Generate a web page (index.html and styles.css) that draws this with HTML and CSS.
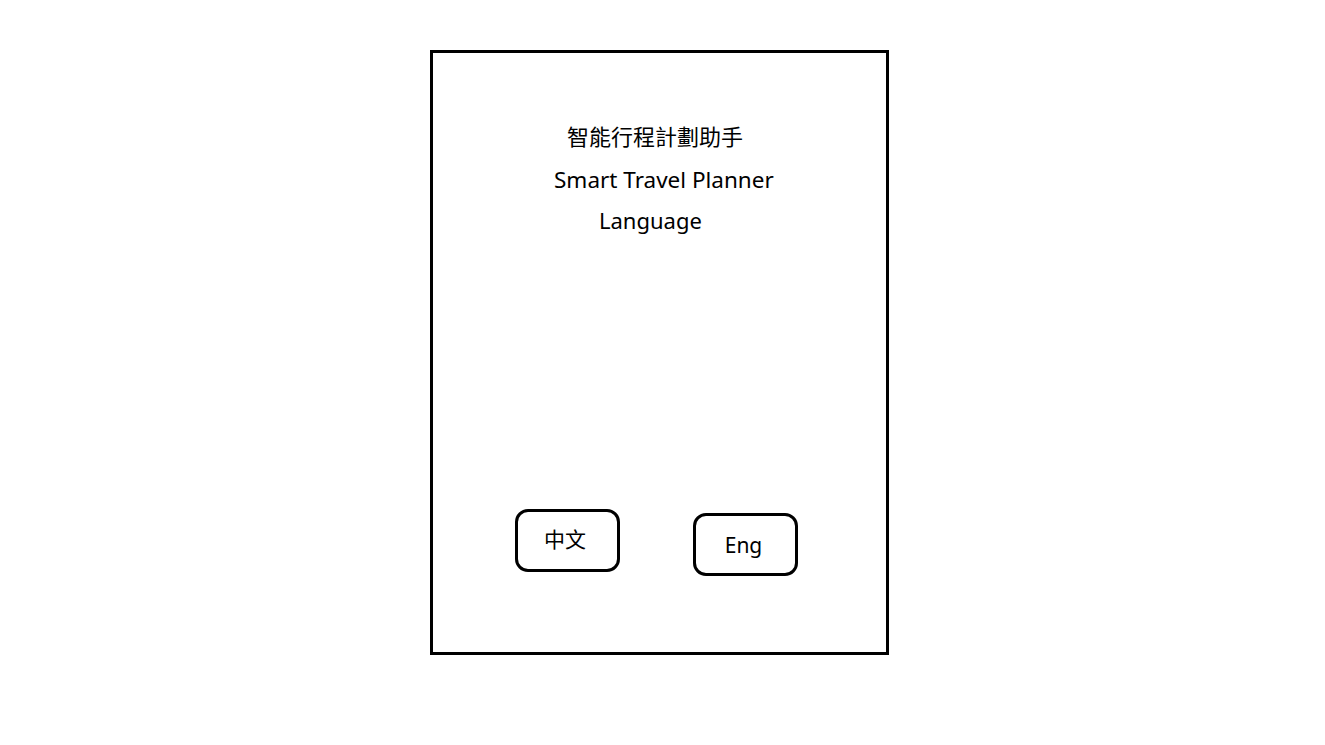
FILE: index.html
```html
<!DOCTYPE html>
<html lang="zh-Hant">
<head>
<meta charset="utf-8">
<title>Smart Travel Planner</title>
<link rel="stylesheet" href="styles.css">
</head>
<body>
<main class="frame">
  <header class="titles">
    <div class="title-zh">智能行程計劃助手</div>
    <div class="title-en">Smart Travel Planner</div>
    <div class="lang-label">Language</div>
  </header>
  <div class="buttons">
    <button class="btn btn-zh">中文</button>
    <button class="btn btn-en">Eng</button>
  </div>
</main>
</body>
</html>
```

FILE: styles.css
```css
html, body {
  margin: 0;
  padding: 0;
  background: #ffffff;
}
body {
  font-family: "Noto Sans", "Open Sans", "Noto Sans CJK TC", sans-serif;
  color: #000;
}
.frame {
  box-sizing: border-box;
  width: 459px;
  height: 605px;
  margin: 50px 0 0 430px;
  border: 3px solid #000;
  display: flex;
  flex-direction: column;
}
.titles {
  padding-top: 67px;
  display: flex;
  flex-direction: column;
}
.title-zh {
  font-family: "Noto Sans CJK TC", sans-serif;
  font-size: 22px;
  line-height: 30px;
  margin-left: 134px;
}
.title-en {
  font-size: 22.5px;
  line-height: 30px;
  margin-top: 15px;
  margin-left: 121px;
}
.lang-label {
  font-size: 22px;
  line-height: 30px;
  margin-top: 10px;
  margin-left: 166px;
}
.buttons {
  margin-top: auto;
  margin-bottom: 76px;
  display: flex;
  align-items: flex-start;
  padding-left: 82px;
  gap: 73px;
}
.btn {
  box-sizing: border-box;
  width: 105px;
  height: 63px;
  border: 3px solid #000;
  border-radius: 13px;
  background: #fff;
  color: #000;
  font-size: 21px;
  padding: 0;
  display: flex;
  align-items: center;
  justify-content: center;
}
.btn-zh {
  font-family: "Noto Sans CJK TC", sans-serif;
  padding-bottom: 6px;
  padding-right: 5px;
}
.btn-en {
  font-family: "Noto Sans", sans-serif;
  margin-top: 4px;
  padding-right: 4px;
}
```
